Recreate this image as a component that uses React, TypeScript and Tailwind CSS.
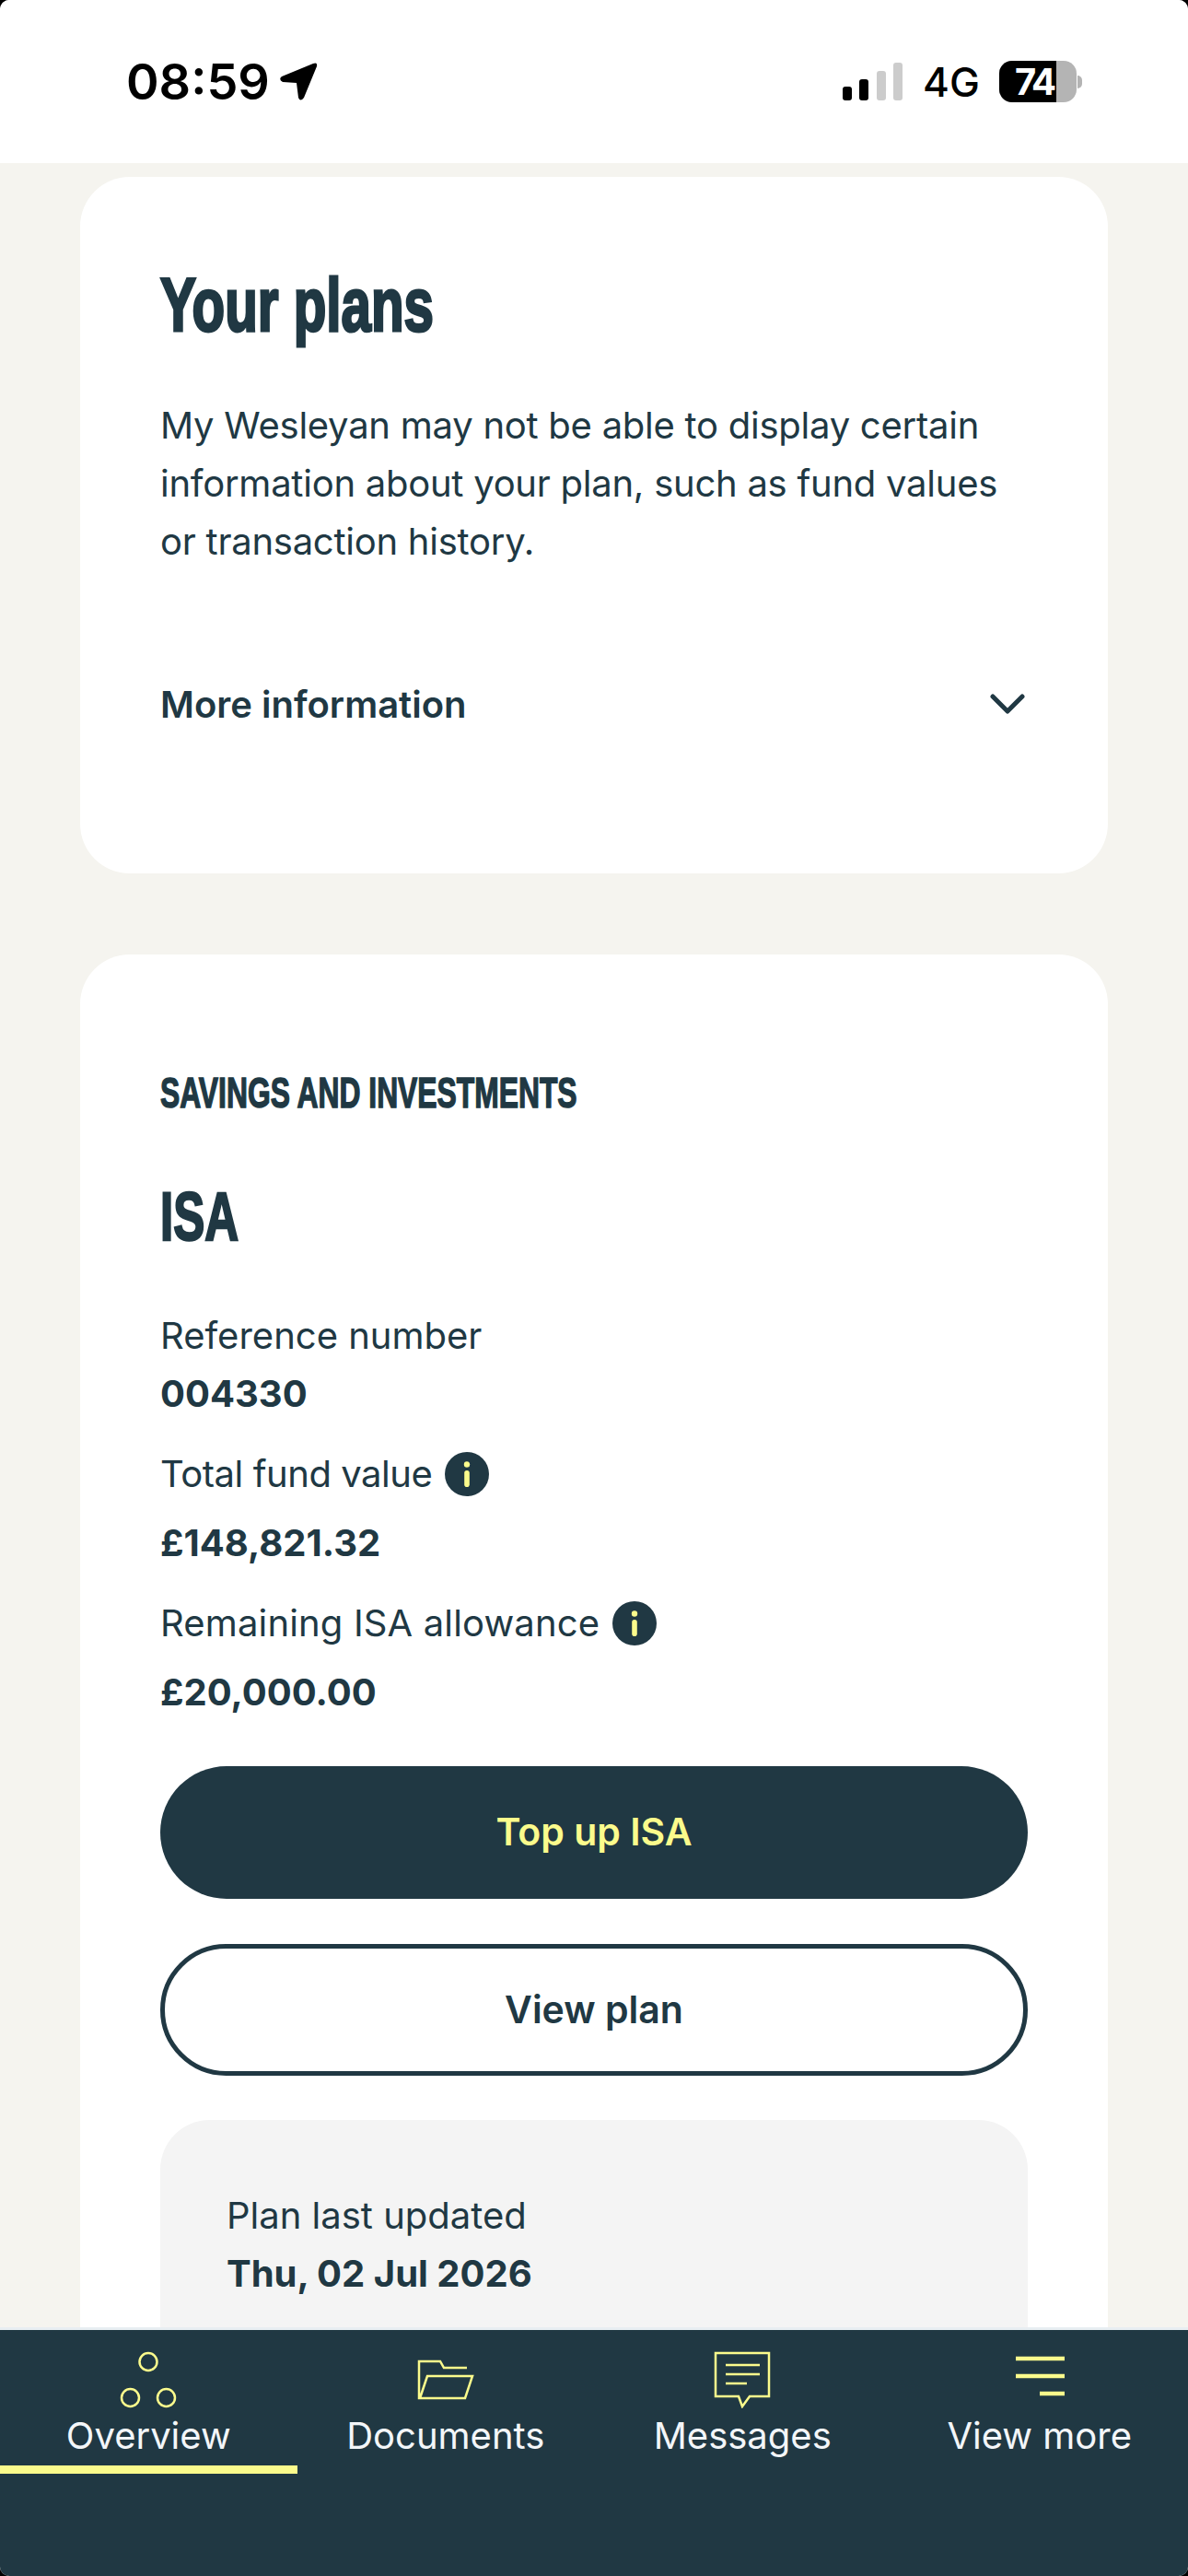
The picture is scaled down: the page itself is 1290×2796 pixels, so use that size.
function InfoIcon() {
  return (
    <svg width="48" height="48" viewBox="0 0 48 48" className="shrink-0">
      <circle cx="24" cy="24" r="24" fill="#203843" />
      <circle cx="24" cy="13.5" r="3.2" fill="#fbfb8c" />
      <rect x="21.2" y="20" width="5.6" height="18" rx="2.8" fill="#fbfb8c" />
    </svg>
  );
}
function NavItem({ label, active, children }: { label: string; active?: boolean; children: React.ReactNode }) {
  return (
    <div className="relative flex w-[322.5px] flex-col items-center pt-[23px]">
      <div className="flex h-[62px] items-start justify-center">{children}</div>
      <div className="mt-[5px] text-[40px] leading-[50px] text-[#f3f6f9]">{label}</div>
      {active && <div className="mt-[7px] h-[9px] w-full bg-[#fbfb8c]" />}
    </div>
  );
}
function Label({ children, className }: { children: React.ReactNode; className?: string }) {
  return <div className={`text-[40px] leading-[63px] ${className ?? ""}`}>{children}</div>;
}
function Value({ children, className }: { children: React.ReactNode; className?: string }) {
  return <div className={`text-[40px] font-bold leading-[63px] ${className ?? ""}`}>{children}</div>;
}
export default function App() {
  return (
    <div className="h-[2796px] w-[1290px] overflow-hidden bg-black">
      <div className="flex h-[2796px] w-[1290px] flex-col overflow-hidden rounded-[10px] bg-white text-[#203843] [font-family:Inter,'Liberation_Sans',sans-serif]">
        <div className="flex h-[177px] shrink-0 items-center justify-between bg-white pl-[137px] pr-[115px]">
          <div className="flex items-center gap-[10px] text-black">
            <span className="text-[54px] font-semibold leading-none">08:59</span>
            <svg width="43" height="43" viewBox="0 0 43 43"><path d="M37 2 Q42 0 41 5 L27 39 Q23 44 21 39 L19 23 L4 22 Q-1 19 3 16 Z" fill="#000" /></svg>
          </div>
          <div className="flex items-center">
            <svg width="66" height="42" viewBox="0 0 66 42" className="mr-[21px]">
              <rect x="0" y="26" width="10" height="15" rx="3" fill="#000" />
              <rect x="18" y="18" width="10" height="23" rx="3" fill="#000" />
              <rect x="37" y="9" width="10" height="32" rx="3" fill="#ccc" />
              <rect x="55" y="0" width="10" height="41" rx="3" fill="#ccc" />
            </svg>
            <span className="mr-[23px] w-[60px] text-[44px] font-medium leading-none text-black">4G</span>
            <div className="relative flex h-[45px] w-[84px] items-center rounded-[14px] bg-[#b4b4b4]">
              <div className="h-full w-[62px] rounded-l-[14px] bg-black" />
              <span className="absolute left-[17px] text-[40px] font-bold leading-none tracking-[-3px] text-white">74</span>
            </div>
            <div className="ml-[1px] h-[14px] w-[5px] rounded-r-full bg-[#b4b4b4]" />
          </div>
        </div>
        <main className="flex min-h-0 flex-1 flex-col gap-[88px] overflow-hidden bg-[#f5f4ef] px-[87px] pt-[15px]">
          <section className="shrink-0 rounded-[54px] bg-white px-[87px] pb-[152px] pt-[97px]">
            <div className="h-[84px] origin-left scale-x-[0.72] whitespace-nowrap text-[81px] font-bold leading-[84px] [-webkit-text-stroke:3px_#203843] [font-family:'Liberation_Sans',sans-serif]">Your plans</div>
            <p className="mt-[57px] text-[40px] leading-[63px] tracking-[-0.25px]">My Wesleyan may not be able to display certain information about your plan, such as fund values or transaction history.</p>
            <div className="mt-[114px] flex items-center justify-between">
              <span className="text-[40px] font-semibold leading-[63px]">More information</span>
              <svg width="38" height="24" viewBox="0 0 38 24" fill="none" stroke="#203843" strokeWidth="5" strokeLinecap="round" strokeLinejoin="round" className="mr-[3px]"><path d="M3 3 L19 19 L35 3" /></svg>
            </div>
          </section>
          <section className="shrink-0 rounded-[54px] bg-white px-[87px] pt-[126px]">
            <div className="h-[48px] origin-left scale-x-[0.677] whitespace-nowrap text-[47px] font-bold leading-[48px] [-webkit-text-stroke:1.5px_#203843] [font-family:'Liberation_Sans',sans-serif]">SAVINGS AND INVESTMENTS</div>
            <div className="mt-[73px] h-[76px] origin-left scale-x-[0.69] whitespace-nowrap text-[74px] font-bold leading-[76px] [-webkit-text-stroke:2.5px_#203843] [font-family:'Liberation_Sans',sans-serif]">ISA</div>
            <div className="mt-[59px]">
              <Label>Reference number</Label>
              <Value>004330</Value>
              <div className="mt-[24px] flex items-center gap-[14px]"><Label className="tracking-[-0.45px]">Total fund value</Label><InfoIcon /></div>
              <Value className="mt-[12px]">£148,821.32</Value>
              <div className="mt-[24px] flex items-center gap-[14px]"><Label className="tracking-[0.15px]">Remaining ISA allowance</Label><InfoIcon /></div>
              <Value className="mt-[12px]">£20,000.00</Value>
            </div>
            <div className="mt-[49px] flex h-[144px] items-center justify-center rounded-full bg-[#203843] text-[41px] font-semibold text-[#fbfb8c]">Top up ISA</div>
            <div className="mt-[49px] flex h-[143px] items-center justify-center rounded-full border-[5px] border-[#203843] text-[41px] font-semibold">View plan</div>
            <div className="mt-[48px] h-[400px] rounded-[54px] bg-[#f4f4f4] px-[72px] pt-[72px]">
              <Label>Plan last updated</Label>
              <Value>Thu, 02 Jul 2026</Value>
            </div>
          </section>
        </main>
        <nav className="flex h-[270px] shrink-0 items-start border-t-[3px] border-[#e8eef2] bg-[#203843]">
          <NavItem label="Overview" active>
            <svg width="62" height="62" viewBox="0 0 62 62" fill="none" stroke="#fbfb8c" strokeWidth="2.5"><circle cx="31" cy="11.5" r="9.5" /><circle cx="11.5" cy="50.5" r="9.5" /><circle cx="50.5" cy="50.5" r="9.5" /></svg>
          </NavItem>
          <NavItem label="Documents">
            <svg width="62" height="62" viewBox="0 0 62 62" fill="none" stroke="#fbfb8c" strokeWidth="2.5"><path d="M54 18 H29 L25 11 H2 V51 H52 L60 27 H11 L3 51" /></svg>
          </NavItem>
          <NavItem label="Messages">
            <svg width="62" height="62" viewBox="0 0 62 62" fill="none" stroke="#fbfb8c" strokeWidth="2.5"><path d="M2 2 H60 V49 H39 L31 60 L27 49 H2 Z" /><path d="M13 15 H50 M13 25 H50 M13 35 H36" /></svg>
          </NavItem>
          <NavItem label="View more">
            <svg width="62" height="62" viewBox="0 0 62 62" fill="none" stroke="#fbfb8c" strokeWidth="4.5"><path d="M5 8 H58 M5 27 H58 M31 46 H58" /></svg>
          </NavItem>
        </nav>
      </div>
    </div>
  );
}
